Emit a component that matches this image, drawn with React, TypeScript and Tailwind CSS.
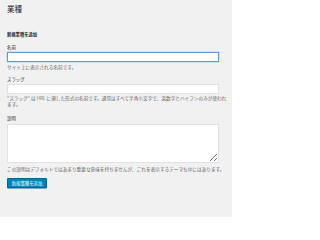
const font = { fontFamily: '"Noto Sans CJK JP", "Noto Sans", sans-serif' };

const Field = ({ label, children, help }: { label: string; children: React.ReactNode; help: React.ReactNode }) => (
  <div>
    <label className="block h-[6px] text-[4.4px] leading-[6px] text-[#23282d]">{label}</label>
    {children}
    <p className="text-[4.65px] leading-[6px] text-[#666]">{help}</p>
  </div>
);

export default function App() {
  return (
    <div
      className="w-[232px] h-[217px] overflow-hidden bg-[#f1f1f1] pl-[7px] pr-[2px] pt-[4px]"
      style={font}
    >
      <h1 className="h-[10px] text-[7.5px] leading-[10px] font-normal text-[#23282d]">業種</h1>

      <h2 className="mt-[16.5px] h-[6px] text-[4.3px] leading-[6px] font-bold text-[#23282d]">
        新規業種を追加
      </h2>

      <div className="mt-[7px]">
        <Field label="名前" help="サイト上に表示される名前です。">
          <input
            type="text"
            className="mt-[2.5px] mb-[2px] block h-[10px] w-[95%] rounded-none border-[0.5px] border-[#5b9dd9] bg-white shadow-[0_0_1px_rgba(30,140,190,0.8)] outline-none"
          />
        </Field>
      </div>

      <div className="mt-[6px]">
        <Field
          label="スラッグ"
          help="“スラッグ” は URL に適した形式の名前です。通常はすべて半角小文字で、英数字とハイフンのみが使われます。"
        >
          <input
            type="text"
            className="mt-[2px] mb-[1px] block h-[10px] w-[95%] rounded-none border-[0.5px] border-[#e2e2e2] bg-white outline-none"
          />
        </Field>
      </div>

      <div className="mt-[8px]">
        <Field
          label="説明"
          help="この説明はデフォルトではあまり重要な意味を持ちませんが、これを表示するテーマも中にはあります。"
        >
          <textarea className="mt-[3px] mb-[3px] block h-[39px] w-[95%] rounded-none border-[0.5px] border-[#e2e2e2] bg-white outline-none" />
        </Field>
      </div>

      <button
        type="button"
        className="mt-[6px] flex h-[10px] w-[40px] items-center justify-center rounded-[1px] border-[0.5px] border-[#006799] bg-[#0085ba] text-[4.4px] leading-none text-white shadow-[0_0.5px_0_#006799]"
      >
        新規業種を追加
      </button>
    </div>
  );
}
